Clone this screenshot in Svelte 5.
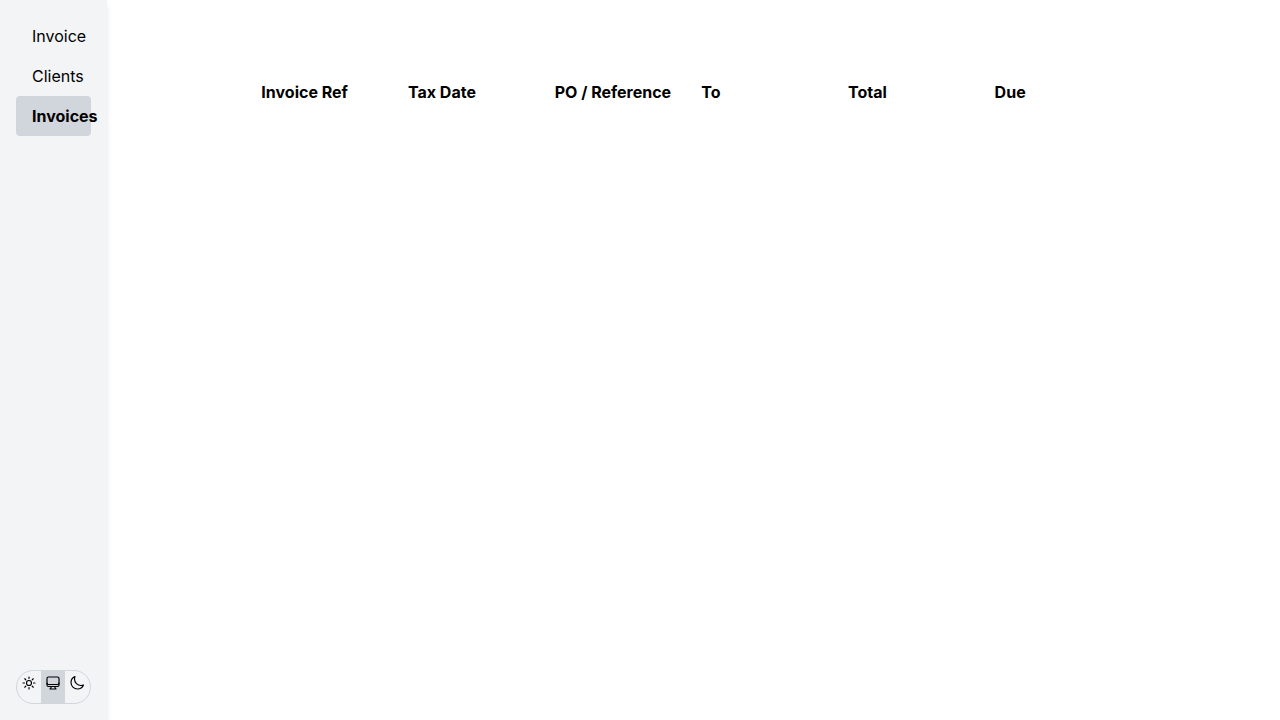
<script>
  const links = ['Invoice', 'Clients', 'Invoices'];
  const columns = ['Invoice Ref', 'Tax Date', 'PO / Reference', 'To', 'Total', 'Due'];
  const themes = ['Light', 'System', 'Dark'];
  let current = $state('Invoices');
  let theme = $state('System');
</script>

<div class="layout">
  <aside>
    <nav aria-label="Main">
      {#each links as link}
        <a
          href={'#' + link.toLowerCase()}
          class:active={current === link}
          aria-current={current === link ? 'page' : undefined}
          onclick={() => (current = link)}>{link}</a>
      {/each}
    </nav>
    <div class="themes" role="group" aria-label="Theme">
      {#each themes as name}
        <button
          type="button"
          aria-label={name}
          aria-pressed={theme === name}
          class:selected={theme === name}
          onclick={() => (theme = name)}>
          <svg viewBox="0 0 24 24" aria-hidden="true">
            {#if name === 'Light'}
              <circle cx="12" cy="12" r="3.75" />
              <path d="M12 3v2.25m6.364.386-1.591 1.591M21 12h-2.25m-.386 6.364-1.591-1.591M12 18.75V21m-4.773-4.227-1.591 1.591M5.25 12H3m4.227-4.773L5.636 5.636" />
            {:else if name === 'System'}
              <path d="M9 17.25v1.007a3 3 0 0 1-.879 2.122L7.5 21h9l-.621-.621A3 3 0 0 1 15 18.257V17.25" />
              <rect x="3" y="3" width="18" height="14.25" rx="2.25" />
              <path d="M3 12a2.25 2.25 0 0 0 2.25 2.25h13.5A2.25 2.25 0 0 0 21 12" />
            {:else}
              <path d="M21.752 15.002A9.718 9.718 0 0 1 18 15.75c-5.385 0-9.75-4.365-9.75-9.75 0-1.33.266-2.597.748-3.752A9.753 9.753 0 0 0 3 11.25C3 16.635 7.365 21 12.75 21a9.753 9.753 0 0 0 9.002-5.998Z" />
            {/if}
          </svg>
        </button>
      {/each}
    </div>
  </aside>
  <main>
    <table>
      <thead>
        <tr>
          {#each columns as column}
            <th scope="col">{column}</th>
          {/each}
        </tr>
      </thead>
    </table>
  </main>
</div>

<style>
  :global(body) {
    background: #fff;
    color: #000;
    font: 16px/24px Inter, sans-serif;
  }
  .layout {
    display: grid;
    grid-template-columns: minmax(0, 1fr) minmax(0, 11fr);
    min-height: 100vh;
  }
  aside {
    display: flex;
    flex-direction: column;
    justify-content: space-between;
    padding: 16px;
    background: #f3f4f6;
    box-shadow: 0 4px 6px -1px rgb(0 0 0 / 10%), 0 2px 4px -2px rgb(0 0 0 / 10%);
  }
  nav {
    display: flex;
    flex-direction: column;
  }
  nav a {
    padding: 8px 16px;
    border-radius: 4px;
    color: inherit;
    text-decoration: none;
  }
  nav a.active {
    background: #d1d5dc;
    font-weight: 700;
  }
  .themes {
    display: flex;
    height: 32px;
    overflow: hidden;
    border: 1px solid #d1d5dc;
    border-radius: 17px;
  }
  button {
    display: flex;
    align-items: flex-start;
    padding: 4px;
    border: 0;
    background: transparent;
    color: inherit;
    cursor: pointer;
  }
  button.selected {
    background: #d1d5dc;
  }
  svg {
    width: 16px;
    height: 16px;
    fill: none;
    stroke: currentColor;
    stroke-width: 1.75;
    stroke-linecap: round;
    stroke-linejoin: round;
  }
  main {
    padding: 72px 0;
  }
  table {
    width: 75%;
    margin: 0 auto;
    table-layout: fixed;
    border-collapse: collapse;
  }
  th {
    padding: 8px;
    font-weight: 700;
    text-align: left;
    white-space: nowrap;
  }
</style>
